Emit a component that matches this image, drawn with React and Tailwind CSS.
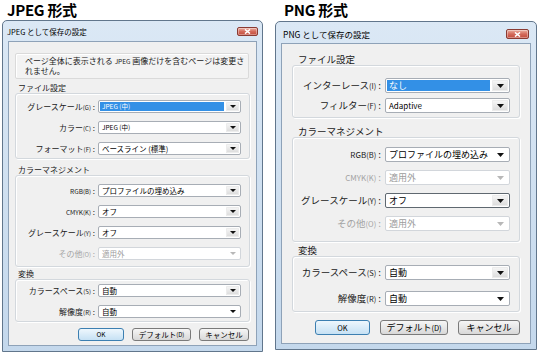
import React from 'react';
import clsx from 'clsx';

const Arrow = ({ disabled, big }) => (
    <svg width={big ? 7 : 6} height={big ? 4 : 3} viewBox="0 0 7 4" preserveAspectRatio="none">
        <path d="M0 0h7L3.5 4z" fill={disabled ? '#b8b8b8' : '#111'} />
    </svg>
);

const CloseButton = ({ big }) => (
    <div
        className={clsx(
            'flex items-center justify-center rounded-[2px] border border-[#8a3b33] bg-linear-to-b from-[#eab0a2] via-[#d46a5b] to-[#c24d3d] shadow-[inset_0_0_0_1px_rgba(255,255,255,0.35)]',
            big ? 'h-[10px] w-[23px]' : 'h-[9px] w-[21px]'
        )}
    >
        <svg width="7" height="5" viewBox="0 0 7 5">
            <path d="M1 0.5l5 4M6 0.5l-5 4" stroke="#fff" strokeWidth="1.6" />
        </svg>
    </div>
);

const Select = ({ value, big, selected, disabled, focused, plain }) => (
    <div
        className={clsx(
            'flex shrink-0 items-stretch rounded-[2px] border bg-white',
            big ? 'h-[15px] w-[125px] text-[9px]' : 'h-[13px] w-[143px] text-[7.5px]',
            disabled ? 'border-[#d2d6db] text-[#9c9c9c]' : focused ? 'border-[#5f6870] text-black' : 'border-[#a7adb5] text-black'
        )}
    >
        <div className="flex flex-1 p-[1px]">
            <div className={clsx('flex flex-1 items-center whitespace-nowrap pl-[2px] leading-none', selected && 'bg-[#3390e6] text-white')}>
                {value}
            </div>
        </div>
        <div
            className={clsx(
                'm-[1px] flex items-center justify-center rounded-[1px]',
                big ? 'w-[16px]' : 'w-[13px]',
                !plain && !disabled && 'bg-linear-to-b from-[#f8f8f8] to-[#dadada] shadow-[inset_0_0_0_1px_#ececec]'
            )}
        >
            <Arrow disabled={disabled} big={big} />
        </div>
    </div>
);

const Row = ({ label, mn, disabled, big, ...rest }) => (
    <div className="flex items-center">
        <div
            className={clsx(
                'whitespace-nowrap text-right leading-none',
                big ? 'mr-[4px] w-[88px] text-[9.5px]' : 'mr-[3px] w-[79px] text-[8px]',
                disabled ? 'text-[#a3a3a3]' : 'text-[#1a1a1a]'
            )}
        >
            {label}
            <span className={big ? 'text-[7.5px]' : 'text-[6px]'}>({mn})</span> :
        </div>
        <Select big={big} disabled={disabled} {...rest} />
    </div>
);

const Group = ({ title, big, titleClass, boxClass, children }) => (
    <div>
        <div className={clsx('whitespace-nowrap leading-none text-[#1a1a1a]', big ? 'h-[10px] pl-[6px] text-[9.5px]' : 'h-[9px] pl-[3px] text-[8px]', titleClass)}>
            {title}
        </div>
        <div className={clsx('flex flex-col rounded-[3px] border border-[#d3d8dd] shadow-[inset_1px_1px_0_#fff,1px_1px_0_#fff]', boxClass)}>
            {children}
        </div>
    </div>
);

const Button = ({ children, primary, className }) => (
    <div
        className={clsx(
            'flex items-center justify-center rounded-[3px] border leading-none text-black',
            primary
                ? 'border-[#3c7fb1] bg-linear-to-b from-[#eef7fd] to-[#c6e1f4]'
                : 'border-[#7a7a7a] bg-linear-to-b from-[#f6f6f6] to-[#d8d8d8]',
            className
        )}
    >
        {children}
    </div>
);

const Window = ({ title, big, className, children }) => (
    <div className={clsx('flex flex-col rounded-t-[5px] border border-[#61768c] bg-linear-to-b from-[#dbe8f5] to-[#c4d8ec]', className)}>
        <div className={clsx('flex items-start justify-between', big ? 'h-[21px] pl-[7px] pr-[7px]' : 'h-[20px] pl-[4px] pr-[4px]')}>
            <div className={clsx('whitespace-nowrap leading-none text-black', big ? 'pt-[8px] text-[8.5px]' : 'pt-[7px] text-[7.5px]')}>{title}</div>
            <div className={big ? 'pt-[7px]' : 'pt-[6px]'}>
                <CloseButton big={big} />
            </div>
        </div>
        <div className="mx-[5px] mb-[5px] flex flex-1 flex-col border border-[#8ea2b8] bg-[#f0f0f0]">{children}</div>
    </div>
);

const JpegDialog = () => (
    <div className="ml-[2px] flex w-[261px] flex-col">
        <div className="h-[20px] pl-[5px] pt-[1px] text-[15px] font-bold leading-[18px] tracking-[-0.3px] text-black">JPEG 形式</div>
        <Window title="JPEG として保存の設定" className="h-[332px]">
            <div className="mx-[6px] mt-[11px] mr-[7px] h-[26px] rounded-[2px] border border-[#dadada] bg-[#f3f3f3] pl-[9px] pt-[2px] text-[8px] leading-[10px] text-[#1a1a1a] shadow-[inset_1px_1px_0_#fff]">
                <div className="whitespace-nowrap">ページ全体に表示される <span className="text-[6.5px]">JPEG</span> 画像だけを含むページは変更さ</div>
                <div className="whitespace-nowrap">れません。</div>
            </div>
            <div className="mx-[6px] mt-[5px]">
                <Group title="ファイル設定" boxClass="gap-[8px] pt-[6px] pb-[3px]">
                    <Row label="グレースケール" mn="G" value={<span className="text-[6.5px]">JPEG (中)</span>} selected />
                    <Row label="カラー" mn="C" value={<span className="text-[6.5px]">JPEG (中)</span>} />
                    <Row label="フォーマット" mn="F" value="ベースライン (標準)" />
                </Group>
            </div>
            <div className="mx-[6px] mt-[7px]">
                <Group title="カラーマネジメント" boxClass="gap-[8px] pt-[8px] pb-[6px]">
                    <Row label={<span className="text-[6.5px]">RGB</span>} mn="B" value="プロファイルの埋め込み" />
                    <Row label={<span className="text-[6.5px]">CMYK</span>} mn="K" value="オフ" />
                    <Row label="グレースケール" mn="Y" value="オフ" />
                    <Row label="その他" mn="O" value="適用外" disabled />
                </Group>
            </div>
            <div className="mx-[6px] mt-[3px]">
                <Group title="変換" boxClass="gap-[8px] pt-[4px] pb-[3px]">
                    <Row label="カラースペース" mn="S" value="自動" />
                    <Row label="解像度" mn="R" value="自動" plain />
                </Group>
            </div>
            <div className="mr-[7px] mt-[6px] flex justify-end gap-[8px] text-[7.5px]">
                <Button primary className="h-[13px] w-[46px] text-[6.5px]">OK</Button>
                <Button className="h-[13px] w-[59px]">デフォルト<span className="text-[6px]">(D)</span></Button>
                <Button className="h-[13px] w-[50px]">キャンセル</Button>
            </div>
        </Window>
    </div>
);

const PngDialog = () => (
    <div className="ml-[12px] flex w-[262px] flex-col">
        <div className="h-[21px] pl-[9px] pt-[1px] text-[15px] font-bold leading-[18px] tracking-[-0.3px] text-black">PNG 形式</div>
        <Window title="PNG として保存の設定" big className="h-[329px]">
            <div className="mx-[10px] mt-[11px]">
                <Group big title="ファイル設定" boxClass="gap-[5px] pt-[12px] pb-[4px]">
                    <Row big label="インターレース" mn="I" value="なし" selected />
                    <Row big label="フィルター" mn="F" value={<span className="text-[8px]">Adaptive</span>} />
                </Group>
            </div>
            <div className="mx-[10px] mt-[9px]">
                <Group big title="カラーマネジメント" boxClass="gap-[8px] pt-[9px] pb-[10px]">
                    <Row big label={<span className="text-[8px]">RGB</span>} mn="B" value="プロファイルの埋め込み" plain />
                    <Row big label={<span className="text-[8px]">CMYK</span>} mn="K" value="適用外" disabled />
                    <Row big label="グレースケール" mn="Y" value="オフ" focused />
                    <Row big label="その他" mn="O" value="適用外" disabled />
                </Group>
            </div>
            <div className="mx-[10px] mt-[4px]">
                <Group big title="変換" boxClass="gap-[11px] pt-[8px] pb-[5px]">
                    <Row big label="カラースペース" mn="S" value="自動" />
                    <Row big label="解像度" mn="R" value="自動" plain />
                </Group>
            </div>
            <div className="mr-[10px] mt-[8px] flex justify-end gap-[10px] text-[9px]">
                <Button primary className="h-[15px] w-[55px] text-[7.5px]">OK</Button>
                <Button className="h-[15px] w-[68px]">デフォルト<span className="text-[7.5px]">(D)</span></Button>
                <Button className="h-[15px] w-[62px]">キャンセル</Button>
            </div>
        </Window>
    </div>
);

const App = () => {
    return (
        <div className="flex h-[359px] w-[539px] overflow-hidden bg-white font-['Noto_Sans_CJK_JP','Noto_Sans',sans-serif]">
            <JpegDialog />
            <PngDialog />
        </div>
    );
};

export default App;
